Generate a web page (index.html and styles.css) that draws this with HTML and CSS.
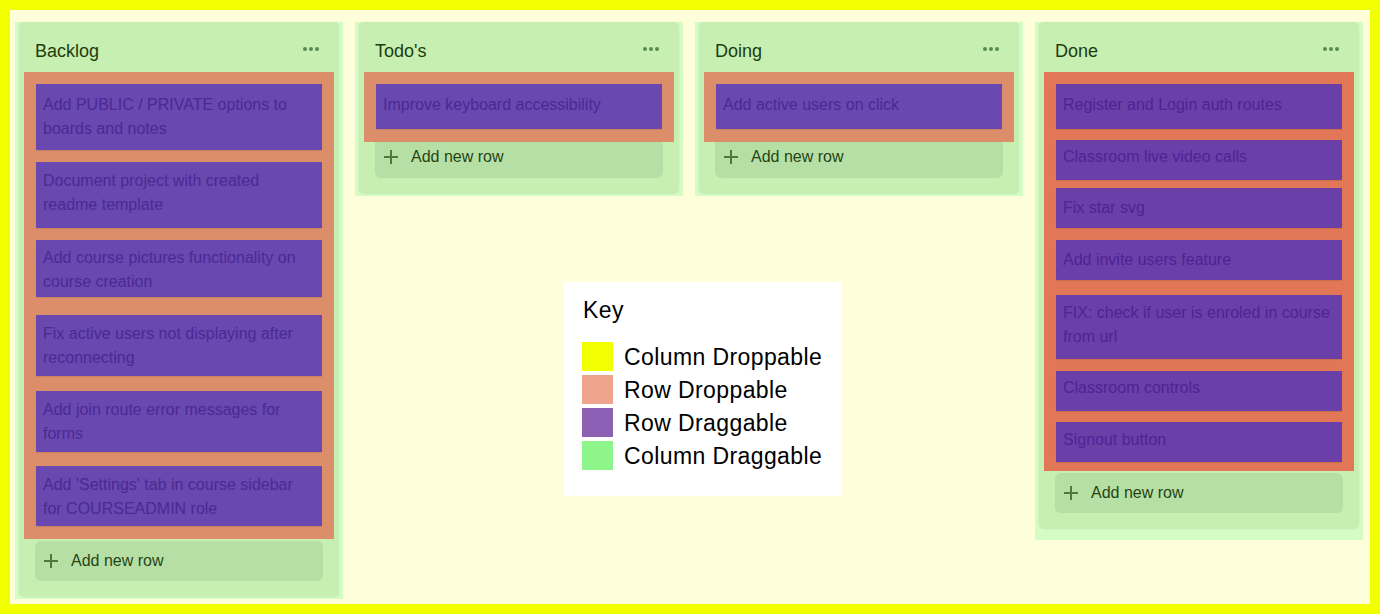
FILE: index.html
```html
<!DOCTYPE html>
<html lang="en">
<head>
<meta charset="utf-8">
<title>Board</title>
<link rel="stylesheet" href="styles.css">
</head>
<body>
<main class="board">
  <div class="col-wrap">
    <section class="column">
      <header class="col-head"><h2>Backlog</h2><span class="dots"><i></i><i></i><i></i></span></header>
      <div class="drop">
        <div class="row lift">Add PUBLIC / PRIVATE options to boards and notes</div>
        <div class="row h66">Document project with created readme template</div>
        <div class="row h57">Add course pictures functionality on course creation</div>
        <div class="row mt18 h61">Fix active users not displaying after reconnecting</div>
        <div class="row mt15 h61">Add join route error messages for forms</div>
        <div class="row mt14">Add 'Settings' tab in course sidebar for COURSEADMIN role</div>
      </div>
      <button class="add-row"><svg viewBox="0 0 16 16" width="16" height="16"><path d="M8 1v14M1 8h14" stroke="#4a7a3d" stroke-width="2" fill="none"/></svg>Add new row</button>
    </section>
  </div>
  <div class="col-wrap">
    <section class="column">
      <header class="col-head"><h2>Todo's</h2><span class="dots"><i></i><i></i><i></i></span></header>
      <div class="drop">
        <div class="row lift">Improve keyboard accessibility</div>
      </div>
      <button class="add-row under"><svg viewBox="0 0 16 16" width="16" height="16"><path d="M8 1v14M1 8h14" stroke="#4a7a3d" stroke-width="2" fill="none"/></svg>Add new row</button>
    </section>
  </div>
  <div class="col-wrap">
    <section class="column">
      <header class="col-head"><h2>Doing</h2><span class="dots"><i></i><i></i><i></i></span></header>
      <div class="drop">
        <div class="row lift">Add active users on click</div>
      </div>
      <button class="add-row under"><svg viewBox="0 0 16 16" width="16" height="16"><path d="M8 1v14M1 8h14" stroke="#4a7a3d" stroke-width="2" fill="none"/></svg>Add new row</button>
    </section>
  </div>
  <div class="col-wrap tall">
    <section class="column">
      <header class="col-head"><h2>Done</h2><span class="dots"><i></i><i></i><i></i></span></header>
      <div class="drop done">
        <div class="row lift">Register and Login auth routes</div>
        <div class="row mt11 pt5">Classroom live video calls</div>
        <div class="row mt8 pt8">Fix star svg</div>
        <div class="row pt8">Add invite users feature</div>
        <div class="row mt15 h64">FIX: check if user is enroled in course from url</div>
        <div class="row pt5">Classroom controls</div>
        <div class="row mt11 pt6">Signout button</div>
      </div>
      <button class="add-row"><svg viewBox="0 0 16 16" width="16" height="16"><path d="M8 1v14M1 8h14" stroke="#4a7a3d" stroke-width="2" fill="none"/></svg>Add new row</button>
    </section>
  </div>
</main>
<aside class="key">
  <h3>Key</h3>
  <ul>
    <li><span class="sw sw-yellow"></span>Column Droppable</li>
    <li><span class="sw sw-salmon"></span>Row Droppable</li>
    <li><span class="sw sw-purple"></span>Row Draggable</li>
    <li><span class="sw sw-green"></span>Column Draggable</li>
  </ul>
</aside>
</body>
</html>
```
FILE: styles.css
```css
* { box-sizing: border-box; }
html, body { margin: 0; padding: 0; }
body {
  width: 1380px;
  height: 614px;
  border: 10px solid #f2ff00;
  background: #feffda;
  position: relative;
  font-family: "Liberation Sans", Arial, sans-serif;
  overflow: hidden;
}
.board {
  display: flex;
  align-items: flex-start;
  gap: 12px;
  padding: 12px 0 0 5px;
}
.col-wrap {
  width: 328px;
  background: #d5fcc4;
  padding: 0 4px 2px 4px;
}
.col-wrap.tall { padding-bottom: 11px; }
.column {
  width: 320px;
  background: #c6efb1;
  border-radius: 5px;
  box-shadow: 0 0 2px rgba(0, 0, 0, 0.08);
  padding-bottom: 16px;
}
.col-head {
  height: 50px;
  padding: 8px 20px 0 16px;
  display: flex;
  align-items: center;
  justify-content: space-between;
}
.col-head h2 {
  margin: 0;
  font-size: 18px;
  font-weight: normal;
  line-height: 22px;
  color: #1f3c0f;
}
.dots { display: flex; gap: 2px; margin-bottom: 4px; }
.dots i { width: 4px; height: 4px; border-radius: 50%; background: #548c52; display: block; }
.drop {
  margin: 0 5px;
  background: #dc8e6b;
  padding: 12px 12px 13px;
  position: relative;
  z-index: 1;
}
.drop.done { background: #e17756; padding-bottom: 9px; }
.row {
  background: #6948b0;
  color: #4b2a92;
  font-size: 16px;
  line-height: 24px;
  padding: 7px 7px 5px;
  min-height: 40px;
  margin-top: 12px;
  box-shadow: 0 1px 1px rgba(0, 0, 0, 0.08);
}
.drop.done .row { background: #6b3fa8; color: #4f2394; }
.row:first-child { margin-top: 0; }
.row.lift { padding-top: 9px; padding-bottom: 9px; min-height: 45px; }
.row.h57 { height: 57px; padding-top: 6px; }
.row.h61 { height: 61px; }
.row.h64 { height: 64px; padding-top: 6px; }
.row.h66 { height: 66px; }
.row.pt5 { padding-top: 5px; }
.row.pt6 { padding-top: 6px; }
.row.pt8 { padding-top: 8px; padding-bottom: 0; }
.row.mt8 { margin-top: 8px; }
.row.mt11 { margin-top: 11px; }
.row.mt14 { margin-top: 14px; }
.row.mt15 { margin-top: 15px; }
.row.mt18 { margin-top: 18px; }
.add-row {
  display: flex;
  align-items: center;
  gap: 12px;
  width: 288px;
  height: 40px;
  margin: 2px 16px 0;
  padding: 0 0 0 8px;
  border: 0;
  border-radius: 6px;
  background: #b6dfa5;
  font-family: "Liberation Sans", Arial, sans-serif;
  font-size: 16px;
  color: #264514;
  text-align: left;
}
.add-row.under { margin-top: -4px; padding-bottom: 2px; }
.add-row svg { display: block; flex: none; }
.key {
  position: absolute;
  left: 554px;
  top: 272px;
  width: 278px;
  height: 214px;
  background: #ffffff;
  padding: 16px 10px 0 18px;
  color: #000;
}
.key h3 {
  margin: 0 0 19px 1px;
  font-size: 23px;
  font-weight: normal;
  line-height: 25px;
  letter-spacing: 0.4px;
}
.key ul { list-style: none; margin: 0; padding: 0; display: flex; flex-direction: column; gap: 4px; }
.key li {
  display: flex;
  align-items: center;
  gap: 11px;
  height: 29px;
  padding-top: 2px;
  font-size: 23px;
  letter-spacing: 0.4px;
  white-space: nowrap;
}
.key li .sw { margin-top: -2px; }
.sw { width: 31px; height: 29px; flex: none; display: block; }
.sw-yellow { background: #f2ff00; }
.sw-salmon { background: #eea48c; }
.sw-purple { background: #8b60b5; }
.sw-green { background: #8ef58a; }
```
